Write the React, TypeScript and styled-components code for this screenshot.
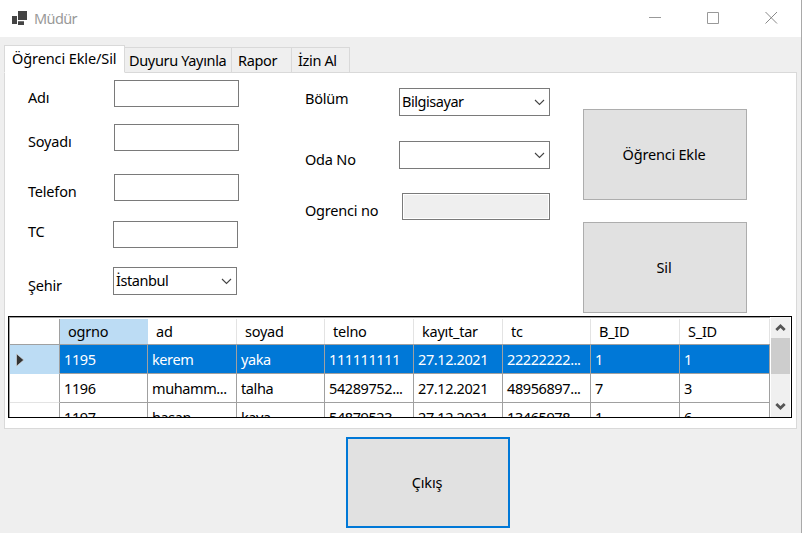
import React from "react";
import styled, { createGlobalStyle } from "styled-components";

const GlobalStyle = createGlobalStyle`
  * { box-sizing: border-box; }
  body { margin: 0; background: #efefef; overflow: hidden; }
`;

const Window = styled.div`
  width: 802px;
  height: 533px;
  overflow: hidden;
  background: #efefef;
  border-right: 1px solid #a9a9a9;
  font: 14.5px/20px "Noto Sans", "Open Sans", sans-serif;
  letter-spacing: -0.25px;
  color: #000;
  display: flex;
  flex-direction: column;
`;

const TitleBar = styled.header`
  height: 37px;
  flex: none;
  background: #fff;
  color: #999;
  display: flex;
  align-items: center;
  padding-left: 11px;
`;

const Title = styled.span`
  margin: 0 0 2px 6px;
  letter-spacing: -0.6px;
  flex: 1;
`;

const CaptionButtons = styled.div`
  display: flex;
  gap: 45px;
  margin: 0 23px 2px 0;
  svg { display: block; }
`;

const Tabs = styled.nav`
  height: 28px;
  margin: 8px 0 -1px 4px;
  flex: none;
  display: flex;
  align-items: flex-end;
  position: relative;
  z-index: 1;
`;

const Tab = styled.div<{ $width: number; $active?: boolean; $inset: number }>`
  width: ${(p) => p.$width}px;
  height: ${(p) => (p.$active ? 28 : 26)}px;
  padding: 2px 0 0 ${(p) => p.$inset}px;
  border: 1px solid #d9d9d9;
  border-left-width: ${(p) => (p.$active ? 1 : 0)}px;
  border-bottom-color: ${(p) => (p.$active ? "#fff" : "#d9d9d9")};
  background: ${(p) => (p.$active ? "#fff" : "#efefef")};
  letter-spacing: ${(p) => (p.$active ? "-0.1px" : "-0.35px")};
  white-space: nowrap;
`;

const Page = styled.main`
  width: 793px;
  height: 357px;
  flex: none;
  margin-left: 4px;
  border: 1px solid #d9d9d9;
  background: #fff;
`;

const Form = styled.div`
  height: 243px;
  display: flex;
`;

const Column = styled.div<{ $left: number; $top: number; $width: number }>`
  margin-left: ${(p) => p.$left}px;
  padding-top: ${(p) => p.$top}px;
  width: ${(p) => p.$width}px;
  flex: none;
  display: flex;
  flex-direction: column;
`;

const Field = styled.div<{ $height: number; $drop: number }>`
  height: ${(p) => p.$height}px;
  display: flex;
  align-items: flex-start;
  > label { padding-top: ${(p) => p.$drop}px; }
`;

const Label = styled.label<{ $width: number }>`
  width: ${(p) => p.$width}px;
  flex: none;
  letter-spacing: -0.2px;
  white-space: nowrap;
`;

const TextBox = styled.div<{ $width: number; $disabled?: boolean }>`
  width: ${(p) => p.$width}px;
  height: 27px;
  border: 1px solid #7a7a7a;
  background: ${(p) => (p.$disabled ? "#efefef" : "#fff")};
  box-shadow: inset 0 0 0 1px #fff;
`;

const ComboBox = styled.div<{ $width: number }>`
  width: ${(p) => p.$width}px;
  height: 28px;
  padding: 0 4px 0 2px;
  border: 1px solid #7a7a7a;
  display: flex;
  align-items: center;
  justify-content: space-between;
`;

const ComboText = styled.span`
  padding-bottom: 2px;
  letter-spacing: -0.45px;
`;

const Button = styled.button<{ $primary?: boolean }>`
  width: 164px;
  height: 91px;
  flex: none;
  padding: 0 2px 2px 0;
  border: ${(p) => (p.$primary ? "2px solid #0078d7" : "1px solid #adadad")};
  background: #e1e1e1;
  color: #000;
  font: inherit;
  letter-spacing: -0.2px;
`;

const Actions = styled(Column)`
  gap: 22px;
`;

const DataGrid = styled.section`
  width: 784px;
  height: 102px;
  margin-left: 3px;
  border: 1px solid #000;
  display: flex;
  overflow: hidden;
`;

const Table = styled.div`
  width: 761px;
  height: 100px;
  flex: none;
  border-top: 1px solid #a0a0a0;
  border-left: 1px solid #a0a0a0;
  overflow: hidden;
`;

const columns = "50px 88px 89px 88px 89px 89px 88px 89px 90px";

const HeaderRow = styled.div`
  display: grid;
  grid-template-columns: ${columns};
  height: 27px;
  border-bottom: 1px solid #a0a0a0;
`;

const HeaderCell = styled.div<{ $selected?: boolean; $corner?: boolean }>`
  padding: 3px 0 0 8px;
  margin-top: 1px;
  border-right: 1px solid ${(p) => (p.$corner ? "#a0a0a0" : p.$selected ? "#bcdcf4" : "#e3e3e3")};
  background: ${(p) => (p.$selected ? "#bcdcf4" : "#fff")};
  line-height: 18px;
`;

const Row = styled.div<{ $selected?: boolean }>`
  display: grid;
  grid-template-columns: ${columns};
  height: 29px;
  background: ${(p) => (p.$selected ? "#0078d7" : "#fff")};
  color: ${(p) => (p.$selected ? "#fff" : "#000")};
`;

const RowHeader = styled.div<{ $selected?: boolean }>`
  border-right: 1px solid #a0a0a0;
  border-bottom: 1px solid ${(p) => (p.$selected ? "#bcdcf4" : "#e3e3e3")};
  background: ${(p) => (p.$selected ? "#bcdcf4" : "#fff")};
  display: flex;
  align-items: center;
  padding: 2px 0 0 5px;
`;

const Cell = styled.div`
  padding: 4px 0 0 4px;
  border-right: 1px solid #a0a0a0;
  border-bottom: 1px solid #a0a0a0;
  letter-spacing: -0.4px;
  white-space: nowrap;
  overflow: hidden;
`;

const ScrollBar = styled.div`
  width: 19px;
  height: 100px;
  margin-left: 1px;
  background: #f0f0f0;
  display: flex;
  flex-direction: column;
  align-items: center;
`;

const Thumb = styled.div`
  width: 19px;
  height: 36px;
  margin-bottom: 22px;
  background: #cdcdcd;
`;

const Footer = styled.footer`
  margin: 8px 0 0 346px;
`;

const AppIcon = () => (
  <svg width="17" height="16" viewBox="0 0 17 16" fill="#444">
    <path d="M7 0h9v9H7zM1 5h5v8H1zM7 10.2h6V14H7z" />
  </svg>
);

const Chevron = () => (
  <svg width="11" height="7" viewBox="0 0 11 7" fill="none" stroke="#444" strokeWidth="1.1">
    <path d="M1 1l4.5 4.5L10 1" />
  </svg>
);

const ScrollArrow = ({ down }: { down?: boolean }) => (
  <svg width="19" height="21" viewBox="0 0 19 21" fill="none" stroke="#555" strokeWidth="2.8">
    <path d={down ? "M5.3 8l4.2 4 4.2-4" : "M5.3 13l4.2-4 4.2 4"} />
  </svg>
);

const headings = ["ogrno", "ad", "soyad", "telno", "kayıt_tar", "tc", "B_ID", "S_ID"];
const students = [
  ["1195", "kerem", "yaka", "111111111", "27.12.2021", "22222222...", "1", "1"],
  ["1196", "muhamm...", "talha", "54289752...", "27.12.2021", "48956897...", "7", "3"],
  ["1197", "hasan", "kaya", "54879523...", "27.12.2021", "13465978...", "1", "6"],
];

export default function App() {
  return (
    <>
      <GlobalStyle />
      <Window>
        <TitleBar>
          <AppIcon />
          <Title>Müdür</Title>
          <CaptionButtons>
            <svg width="13" height="13" stroke="#999"><path d="M0 6.5h12" /></svg>
            <svg width="13" height="13" fill="none" stroke="#999"><path d="M.5 1.5h11v11H.5z" /></svg>
            <svg width="13" height="13" stroke="#888"><path d="M.5 1l11.5 11.5M12 1L.5 12.5" /></svg>
          </CaptionButtons>
        </TitleBar>
        <Tabs>
          <Tab $width={121} $inset={7} $active>Öğrenci Ekle/Sil</Tab>
          <Tab $width={107} $inset={4}>Duyuru Yayınla</Tab>
          <Tab $width={60} $inset={6}>Rapor</Tab>
          <Tab $width={58} $inset={6}>İzin Al</Tab>
        </Tabs>
        <Page>
          <Form>
            <Column $left={23} $top={7} $width={211}>
              <Field $height={44} $drop={7}><Label $width={86}>Adı</Label><TextBox $width={125} /></Field>
              <Field $height={50} $drop={7}><Label $width={86}>Soyadı</Label><TextBox $width={125} /></Field>
              <Field $height={47} $drop={7}><Label $width={86}>Telefon</Label><TextBox $width={125} /></Field>
              <Field $height={46} $drop={0}><Label $width={85}>TC</Label><TextBox $width={125} /></Field>
              <Field $height={28} $drop={8}>
                <Label $width={85}>Şehir</Label>
                <ComboBox $width={124}><ComboText>İstanbul</ComboText><Chevron /></ComboBox>
              </Field>
            </Column>
            <Column $left={66} $top={15} $width={245}>
              <Field $height={53} $drop={0}>
                <Label $width={94}>Bölüm</Label>
                <ComboBox $width={151}><ComboText>Bilgisayar</ComboText><Chevron /></ComboBox>
              </Field>
              <Field $height={52} $drop={8}>
                <Label $width={94}>Oda No</Label>
                <ComboBox $width={151}><ComboText /><Chevron /></ComboBox>
              </Field>
              <Field $height={27} $drop={7}><Label $width={97}>Ogrenci no</Label><TextBox $width={148} $disabled /></Field>
            </Column>
            <Actions $left={33} $top={36} $width={164}>
              <Button>Öğrenci Ekle</Button>
              <Button>Sil</Button>
            </Actions>
          </Form>
          <DataGrid>
            <Table>
              <HeaderRow>
                <HeaderCell $corner />
                {headings.map((text, i) => (
                  <HeaderCell key={text} $selected={i === 0}>{text}</HeaderCell>
                ))}
              </HeaderRow>
              {students.map((student, r) => (
                <Row key={student[0]} $selected={r === 0}>
                  <RowHeader $selected={r === 0}>
                    {r === 0 && (
                      <svg width="10" height="14" viewBox="0 0 10 14"><path d="M1.5.8L8.7 7l-7.2 6.2z" fill="#333" stroke="#e0e0e0" strokeWidth=".6" /></svg>
                    )}
                  </RowHeader>
                  {student.map((text, i) => <Cell key={i}>{text}</Cell>)}
                </Row>
              ))}
            </Table>
            <ScrollBar>
              <ScrollArrow />
              <Thumb />
              <ScrollArrow down />
            </ScrollBar>
          </DataGrid>
        </Page>
        <Footer>
          <Button $primary>Çıkış</Button>
        </Footer>
      </Window>
    </>
  );
}
